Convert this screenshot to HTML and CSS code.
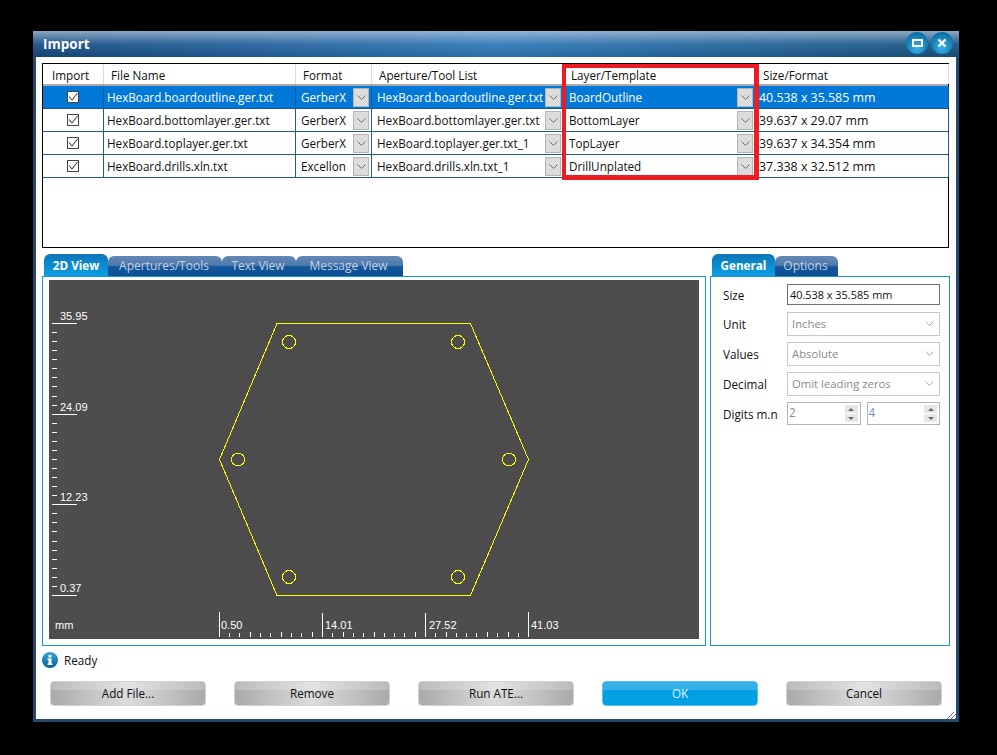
FILE: index.html
```html
<!DOCTYPE html>
<html lang="en">
<head>
    <meta charset="UTF-8">
    <title>Import</title>
    <link rel="stylesheet" href="styles.css">
</head>
<body>
    <svg class="defs" width="0" height="0">
        <symbol id="chev" viewBox="0 0 9 5"><path d="M.5 .5L4.5 4.5L8.500 .5" fill="none" stroke="currentColor"/></symbol>
        <symbol id="check" viewBox="0 0 12 12"><path d="M2 5.500L5 9L10.500 2" fill="none" stroke="#444" stroke-width="1.100"/></symbol>
    </svg>
    <div class="window">
        <div class="titlebar">
            <span class="title">Import</span>
            <span class="win-btn"><svg width="11" height="8"><rect x="1" y="1" width="9" height="6" fill="none" stroke="#fff" stroke-width="2"/></svg></span>
            <span class="win-btn"><svg width="10" height="10"><path d="M1.500 1.500L8.500 8.500M8.500 1.500L1.500 8.500" stroke="#fff" stroke-width="2.400"/></svg></span>
        </div>
        <div class="client">
            <div class="file-table">
                <div class="row head">
                    <div class="cell">Import</div>
                    <div class="cell">File Name</div>
                    <div class="cell">Format</div>
                    <div class="cell">Aperture/Tool List</div>
                    <div class="cell">Layer/Template</div>
                    <div class="cell">Size/Format</div>
                </div>
                <div class="row selected">
                    <div class="cell"><span class="checkbox"><svg width="12" height="12"><use href="#check"/></svg></span></div>
                    <div class="cell">HexBoard.boardoutline.ger.txt</div>
                    <div class="cell">GerberX<span class="combo"><svg width="9" height="5"><use href="#chev"/></svg></span></div>
                    <div class="cell">HexBoard.boardoutline.ger.txt<span class="combo"><svg width="9" height="5"><use href="#chev"/></svg></span></div>
                    <div class="cell">BoardOutline<span class="combo"><svg width="9" height="5"><use href="#chev"/></svg></span></div>
                    <div class="cell">40.538 x 35.585 mm</div>
                </div>
                <div class="row">
                    <div class="cell"><span class="checkbox"><svg width="12" height="12"><use href="#check"/></svg></span></div>
                    <div class="cell">HexBoard.bottomlayer.ger.txt</div>
                    <div class="cell">GerberX<span class="combo"><svg width="9" height="5"><use href="#chev"/></svg></span></div>
                    <div class="cell">HexBoard.bottomlayer.ger.txt<span class="combo"><svg width="9" height="5"><use href="#chev"/></svg></span></div>
                    <div class="cell">BottomLayer<span class="combo"><svg width="9" height="5"><use href="#chev"/></svg></span></div>
                    <div class="cell">39.637 x 29.07 mm</div>
                </div>
                <div class="row">
                    <div class="cell"><span class="checkbox"><svg width="12" height="12"><use href="#check"/></svg></span></div>
                    <div class="cell">HexBoard.toplayer.ger.txt</div>
                    <div class="cell">GerberX<span class="combo"><svg width="9" height="5"><use href="#chev"/></svg></span></div>
                    <div class="cell">HexBoard.toplayer.ger.txt_1<span class="combo"><svg width="9" height="5"><use href="#chev"/></svg></span></div>
                    <div class="cell">TopLayer<span class="combo"><svg width="9" height="5"><use href="#chev"/></svg></span></div>
                    <div class="cell">39.637 x 34.354 mm</div>
                </div>
                <div class="row">
                    <div class="cell"><span class="checkbox"><svg width="12" height="12"><use href="#check"/></svg></span></div>
                    <div class="cell">HexBoard.drills.xln.txt</div>
                    <div class="cell">Excellon<span class="combo"><svg width="9" height="5"><use href="#chev"/></svg></span></div>
                    <div class="cell">HexBoard.drills.xln.txt_1<span class="combo"><svg width="9" height="5"><use href="#chev"/></svg></span></div>
                    <div class="cell">DrillUnplated<span class="combo"><svg width="9" height="5"><use href="#chev"/></svg></span></div>
                    <div class="cell">37.338 x 32.512 mm</div>
                </div>
                <div class="highlight"></div>
            </div>

            <div class="panes">
                <div class="pane view-pane">
                    <div class="tabs">
                        <span class="tab active tab-2d">2D View</span>
                        <span class="tab tab-apertures">Apertures/Tools</span>
                        <span class="tab tab-text">Text View</span>
                        <span class="tab tab-message">Message View</span>
                    </div>
                    <div class="tab-body view-body">
                        <svg class="canvas" width="650" height="359" viewBox="49 280 650 359">
                            <rect x="49" y="280" width="650" height="359" fill="#4d4d4d"/>
                            <path class="outline" d="M277 323.500H470.500L528.500 459.500L470.500 595.500H277L219.500 459.500Z"/>
                            <circle class="drill" cx="289" cy="342" r="6.500"/>
                            <circle class="drill" cx="458" cy="342" r="6.500"/>
                            <circle class="drill" cx="238" cy="459.500" r="6.500"/>
                            <circle class="drill" cx="509" cy="459.500" r="6.500"/>
                            <circle class="drill" cx="289" cy="577" r="6.500"/>
                            <circle class="drill" cx="458" cy="577" r="6.500"/>
                            <path class="ruler" d="M52 323.500h25M52 414.500h25M52 504.500h25M52 595.500h25
                                M52 332.500h5M52 341.500h5M52 350.500h5M52 359.500h5M52 368.500h5M52 377.500h5M52 386.500h5M52 396.500h5M52 405.500h5
                                M52 423.500h5M52 432.500h5M52 441.500h5M52 450.500h5M52 459.500h5M52 468.500h5M52 477.500h5M52 486.500h5M52 495.500h5
                                M52 513.500h5M52 522.500h5M52 531.500h5M52 541.500h5M52 550.500h5M52 559.500h5M52 568.500h5M52 577.500h5M52 586.500h5
                                M219.500 612V637M322.500 613V637M425.500 613V637M528.500 612V637
                                M229.500 633v4M239.500 633v4M250.500 632v5M260.500 633v4M270.500 633v4M281.500 632v5M291.500 633v4M301.500 633v4M312.500 632v5
                                M332.500 633v4M343.500 632v5M353.500 633v4M363.500 633v4M374.500 632v5M384.500 633v4M394.500 633v4M404.500 633v4M415.500 632v5
                                M435.500 633v4M446.500 632v5M456.500 633v4M466.500 633v4M476.500 633v4M487.500 632v5M497.500 633v4M508.500 632v5M518.500 633v4"/>
                            <text x="60" y="320">35.95</text>
                            <text x="60" y="411">24.09</text>
                            <text x="60" y="501">12.23</text>
                            <text x="60" y="592">0.37</text>
                            <text x="55" y="629">mm</text>
                            <text x="221" y="629">0.50</text>
                            <text x="325" y="629">14.01</text>
                            <text x="429" y="629">27.52</text>
                            <text x="531" y="629">41.03</text>
                        </svg>
                    </div>
                </div>
                <div class="pane props-pane">
                    <div class="tabs">
                        <span class="tab active tab-general">General</span>
                        <span class="tab tab-options">Options</span>
                    </div>
                    <div class="tab-body props">
                        <label>Size</label>
                        <div class="field size-field">40.538 x 35.585 mm</div>
                        <label>Unit</label>
                        <div class="field select">Inches<svg width="9" height="5"><use href="#chev"/></svg></div>
                        <label>Values</label>
                        <div class="field select">Absolute<svg width="9" height="5"><use href="#chev"/></svg></div>
                        <label>Decimal</label>
                        <div class="field select">Omit leading zeros<svg width="9" height="5"><use href="#chev"/></svg></div>
                        <label>Digits m.n</label>
                        <div class="spins">
                            <div class="field spin">2<span class="arrows"><i class="up"></i><i class="down"></i></span></div>
                            <div class="field spin">4<span class="arrows"><i class="up"></i><i class="down"></i></span></div>
                        </div>
                    </div>
                </div>
            </div>

            <div class="status">
                <svg width="16" height="16" viewBox="0 0 16 16">
                    <defs><linearGradient id="info" x1="0" y1="0" x2="0" y2="1"><stop offset="0" stop-color="#3aa6d8"/><stop offset="1" stop-color="#045f96"/></linearGradient></defs>
                    <circle cx="8" cy="8" r="8" fill="url(#info)"/>
                    <rect x="6.500" y="3" width="3" height="2.500" fill="#fff"/>
                    <path d="M5.500 6.500H9.500V11.500H10.500V13H5.500V11.500H6.500V8H5.500Z" fill="#fff"/>
                </svg>
                <span>Ready</span>
            </div>

            <div class="actions">
                <button>Add File...</button>
                <button>Remove</button>
                <button>Run ATE...</button>
                <button class="primary">OK</button>
                <button>Cancel</button>
            </div>
        </div>
        <svg class="grip" width="9" height="7" viewBox="0 0 9 7"><path d="M0 7L7 0M4 7L9 2M8 7L9 6" stroke="#5a6c80"/></svg>
    </div>
</body>
</html>
```
FILE: styles.css
```css
html, body {
    margin: 0;
    height: 100%;
    overflow: hidden;
    background-color: #000;
}
body {
    font-family: "Open Sans", "Noto Sans", sans-serif;
    font-size: 11.7px;
    color: #111;
}
.defs {
    position: absolute;
}

.window {
    position: relative;
    box-sizing: border-box;
    width: 926px;
    height: 691px;
    margin: 31px 0 0 33px;
    display: flex;
    flex-direction: column;
    border: 3px solid #254a6e;
    border-top: none;
    background-color: #fff;
}
.titlebar {
    height: 26px;
    margin: 0 -3px;
    padding: 0 6px 2px 10px;
    box-sizing: border-box;
    display: flex;
    align-items: center;
    gap: 3px;
    background:
        linear-gradient(to bottom, rgba(190, 205, 225, 0.7), rgba(255, 255, 255, 0.08) 50%, rgba(0, 0, 0, 0.08)),
        linear-gradient(to right, #154b80, #2f78b8 50%, #17527f);
}
.title {
    margin-top: 2px;
    margin-right: auto;
    color: #fff;
    font-size: 13.500px;
    font-weight: bold;
}
.win-btn {
    width: 22px;
    height: 22px;
    border-radius: 50%;
    display: flex;
    align-items: center;
    justify-content: center;
    background: radial-gradient(circle at 50% 70%, #35b4e6, #0e6ea8 75%);
}

.client {
    flex: 1;
    display: flex;
    flex-direction: column;
    padding: 6px 6px 0 6px;
}
.file-table {
    position: relative;
    box-sizing: border-box;
    height: 185px;
    margin-right: 1px;
    border: 1px solid #000;
}
.row {
    box-sizing: border-box;
    height: 23px;
    display: grid;
    grid-template-columns: 61px 192px 76px 191px 195px 191px;
    border-bottom: 1px solid #1d5a96;
}
.row.head {
    height: 22px;
    border-bottom: 2px solid #aaa;
}
.row.selected {
    background-color: #0078d7;
    color: #fff;
}
.cell {
    position: relative;
    box-sizing: border-box;
    padding: 0 3px;
    display: flex;
    align-items: center;
    white-space: nowrap;
    overflow: hidden;
    border-right: 1px solid #1d5a96;
}
.cell:nth-child(1) {
    justify-content: center;
}
.cell:nth-child(3), .cell:nth-child(4) {
    padding-left: 5px;
}
.cell:nth-child(5) {
    padding-left: 6px;
}
.cell:nth-child(6) {
    padding-left: 1px;
    font-size: 12.400px;
}
.head .cell {
    padding-top: 2px;
    padding-left: 7px;
    border-right-color: #ddd;
}
.head .cell:nth-child(1) {
    justify-content: flex-start;
    padding-left: 9px;
}
.head .cell:nth-child(5) {
    padding-left: 8px;
}
.head .cell:nth-child(6) {
    padding-left: 5px;
    font-size: 11.700px;
}
.checkbox {
    box-sizing: border-box;
    width: 12px;
    height: 12px;
    display: flex;
    border: 1px solid #444;
    background-color: #fff;
}
.checkbox svg {
    margin: -1px;
}
.combo {
    position: absolute;
    top: 2px;
    right: 1px;
    bottom: 1px;
    width: 16px;
    box-sizing: border-box;
    display: flex;
    align-items: center;
    justify-content: center;
    border: 1px solid #b4b4b4;
    background-color: #dcdcdc;
    color: #6e6e6e;
}
.cell:nth-child(3) .combo {
    right: 2px;
}
.cell:nth-child(5) .combo {
    right: 4px;
}
.highlight {
    position: absolute;
    left: 519px;
    top: 0;
    width: 197px;
    height: 116px;
    box-sizing: border-box;
    border: solid #ed1c24;
    border-width: 4px 5px 5px 4px;
}

.panes {
    display: flex;
    gap: 4px;
    margin-top: 6px;
}
.view-pane {
    width: 664px;
}
.props-pane {
    width: 240px;
}
.tabs {
    height: 22px;
    padding-left: 2px;
    display: flex;
    align-items: flex-end;
}
.tab {
    box-sizing: border-box;
    height: 20px;
    padding: 0 2px 1px 0;
    display: flex;
    align-items: center;
    justify-content: center;
    border-radius: 6px 6px 0 0;
    font-size: 12px;
    color: #c3d2e4;
    background: linear-gradient(to bottom, #6389b6, #4f7aab 45%, #11559c 55%, #0f4f94);
}
.tab.active {
    height: 22px;
    padding-right: 0;
    font-size: 11.700px;
    color: #fff;
    font-weight: bold;
    background: linear-gradient(to bottom, #0e75b8, #0c8fd3 60%, #0a9fe2);
}
.tab-2d { width: 64px; }
.tab-apertures { width: 114px; }
.tab-text { width: 74px; }
.tab-message { width: 107px; }
.tab-general { width: 63px; }
.tab-options { width: 63px; }
.tab-body {
    box-sizing: border-box;
    height: 370px;
    border: 1px solid #1b94d1;
}
.view-body {
    padding: 3px 6px 6px 6px;
}
.canvas {
    display: block;
}
.canvas text {
    font-family: "Liberation Sans", sans-serif;
    font-size: 11px;
    fill: #fff;
}
.outline, .drill {
    fill: none;
    stroke: #ffff00;
    stroke-width: 1;
    shape-rendering: crispEdges;
}
.ruler {
    fill: none;
    stroke: #fff;
    stroke-width: 1;
}

.props {
    padding: 7px 9px 0 12px;
    display: grid;
    grid-template-columns: 64px 153px;
    grid-template-rows: 22px 24px 24px 24px 23px;
    row-gap: 6px;
    align-content: start;
    align-items: center;
}
.props label {
    white-space: nowrap;
}
.field {
    box-sizing: border-box;
    height: 100%;
    padding: 0 4px;
    display: flex;
    align-items: center;
    white-space: nowrap;
    border: 1px solid #c8c8c8;
    color: #8a8a8a;
}
.size-field {
    align-self: start;
    height: 21px;
    padding: 0 2px 1px 2px;
    border-color: #6e6e6e;
    color: #111;
    font-size: 10.900px;
}
.select {
    justify-content: space-between;
    padding-right: 5px;
    padding-bottom: 1px;
    font-size: 11.300px;
}
.select svg {
    color: #a8a8a8;
}
.spins {
    height: 100%;
    display: flex;
    gap: 6px;
}
.spin {
    position: relative;
    flex: 1;
    padding: 0 1px 3px 1px;
    border-color: #b4b4b4;
    color: #7c8db0;
}
.arrows {
    position: absolute;
    top: 2px;
    right: 2px;
    bottom: 2px;
    width: 13px;
    display: flex;
    flex-direction: column;
    gap: 1px;
}
.arrows i {
    flex: 1;
    display: flex;
    align-items: center;
    justify-content: center;
    background-color: #e6e6e6;
}
.arrows i::before {
    content: "";
    border-left: 3px solid transparent;
    border-right: 3px solid transparent;
}
.arrows .up::before {
    border-bottom: 3px solid #666;
}
.arrows .down::before {
    border-top: 3px solid #666;
}

.status {
    height: 16px;
    margin-top: 6px;
    display: flex;
    align-items: center;
    gap: 6px;
}
.actions {
    display: flex;
    gap: 28px;
    margin: 13px 0 0 8px;
}
button {
    box-sizing: border-box;
    width: 156px;
    height: 25px;
    padding: 0 0 1px 0;
    font: inherit;
    color: #111;
    border: 1px solid #d2d2d2;
    border-radius: 4px;
    background:
        linear-gradient(to bottom, rgba(255, 255, 255, 0.2) 36%, transparent 36%),
        linear-gradient(to right, #aaa, #dcdcdc 50%, #aaa);
}
button.primary {
    color: #e4f4fc;
    border-color: #5cc0ec;
    background:
        linear-gradient(to bottom, #36b0e8 36%, #00a0e3 36%);
}
.grip {
    position: absolute;
    right: 0;
    bottom: 0;
}
```
